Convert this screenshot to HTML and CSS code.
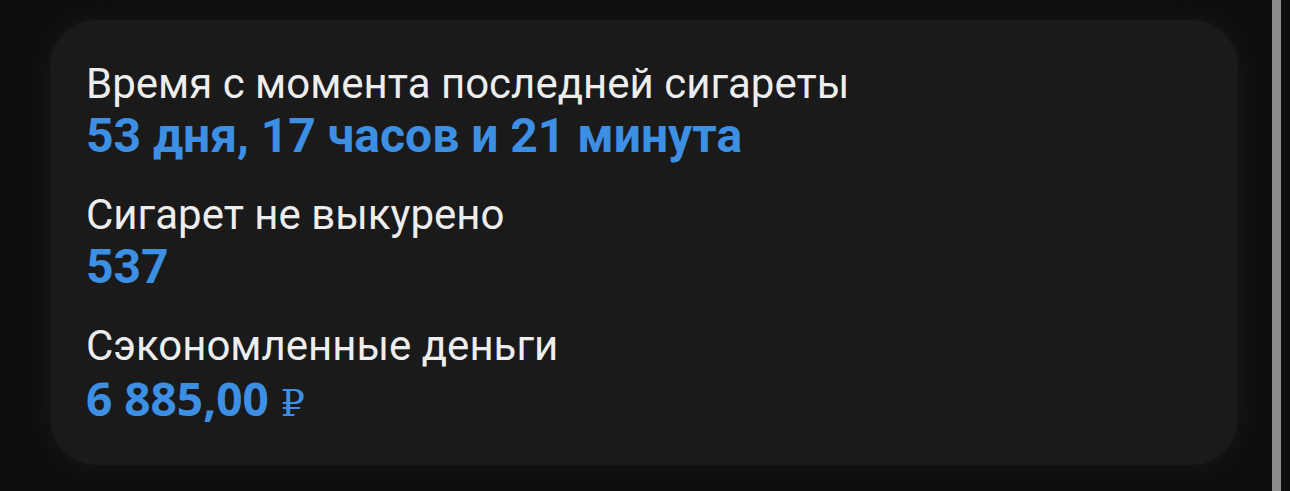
FILE: index.html
```html
<!DOCTYPE html>
<html lang="ru">
<head>
<meta charset="utf-8">
<link rel="stylesheet" href="styles.css">
</head>
<body>
<div class="page">
  <div class="content">
    <div class="card">
      <div class="stat">
        <div class="label">Время с момента последней сигареты</div>
        <div class="value">53 дня, 17 часов и 21 минута</div>
      </div>
      <div class="stat">
        <div class="label">Сигарет не выкурено</div>
        <div class="value">537</div>
      </div>
      <div class="stat">
        <div class="label">Сэкономленные деньги</div>
        <div class="value money">6 885,00 <span class="cur">₽</span></div>
      </div>
    </div>
  </div>
  <div class="scrollbar"><div class="thumb"></div></div>
</div>
</body>
</html>
```
FILE: styles.css
```css
html, body {
  margin: 0;
  padding: 0;
  background: #0e0e0e;
}
.page {
  width: 1290px;
  height: 491px;
  display: flex;
  overflow: hidden;
}
.content {
  flex: 1;
  padding: 20px 32px 0 50px;
}
.card {
  background: #1a1a1a;
  border-radius: 46px;
  height: 445px;
  box-sizing: border-box;
  padding: 38px 36px 0 36px;
  box-shadow: 0 0 22px 6px rgba(22, 22, 22, 0.9);
  display: flex;
  flex-direction: column;
  gap: 27px;
}
.stat {
  display: flex;
  flex-direction: column;
}
.label {
  font-family: Roboto, "Noto Sans", sans-serif;
  font-size: 42px;
  line-height: 52px;
  color: #ededed;
}
.value {
  font-family: Roboto, "Noto Sans", sans-serif;
  font-weight: 700;
  font-size: 48px;
  line-height: 52px;
  color: #3d8fe3;
}
.money {
  font-family: "Open Sans", Roboto, sans-serif;
  font-size: 46px;
}
.cur {
  font-family: "DejaVu Serif", serif;
  font-weight: 400;
  font-size: 38px;
}
.scrollbar {
  width: 18px;
  display: flex;
  padding-left: 2px;
}
.thumb {
  width: 9px;
  background: #8a8a8a;
}
```
